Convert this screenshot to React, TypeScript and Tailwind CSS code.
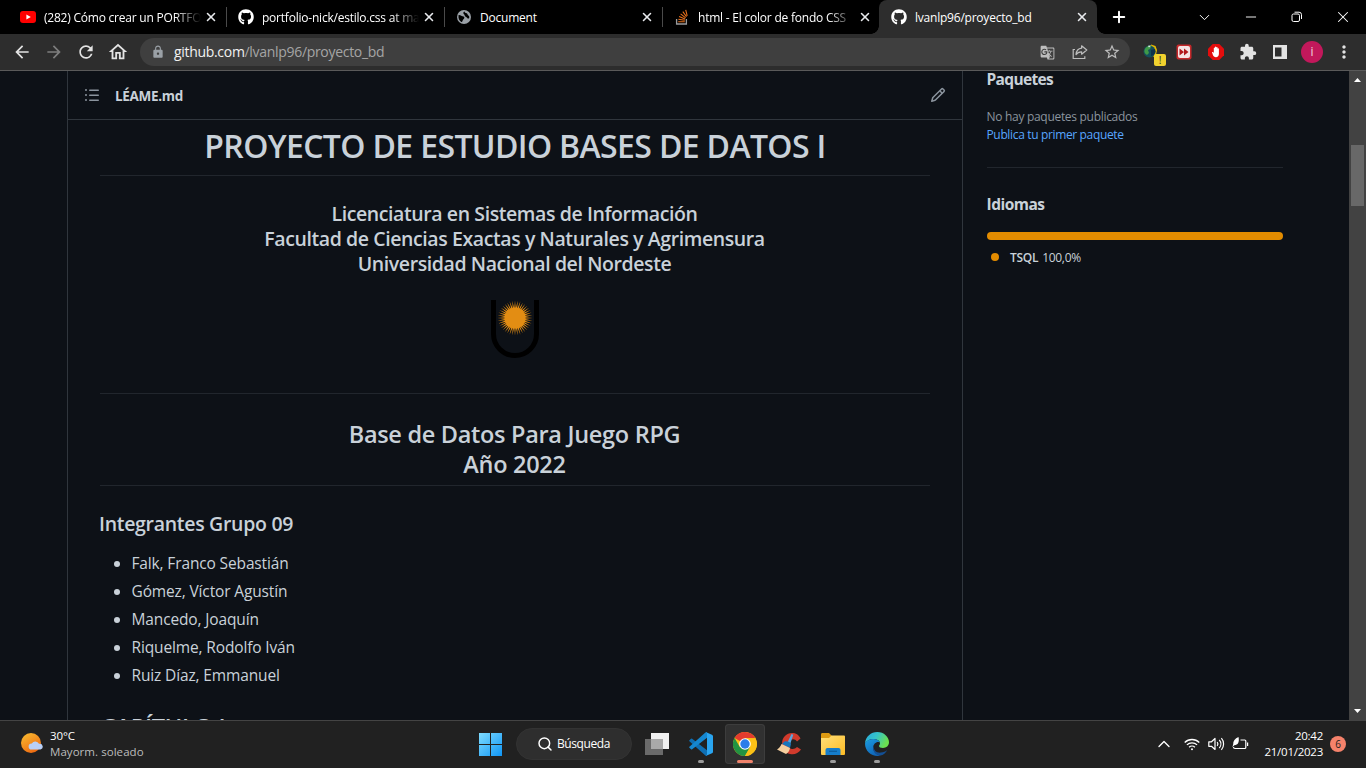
import React from "react";
import {
  MdArrowBack,
  MdArrowForward,
  MdRefresh,
  MdOutlineHome,
  MdLock,
  MdGTranslate,
  MdStarBorder,
  MdExtension,
  MdMoreVert,
} from "react-icons/md";
import { FaGithub } from "react-icons/fa";
import { ChevronDown, ChevronUp, Minus, Plus, Search, X } from "lucide-react";

function YouTubeIcon() {
  return (
    <svg viewBox="0 0 16 16" className="size-4">
      <rect x="0" y="2" width="16" height="12" rx="3" fill="#f00" />
      <path d="M6.4 5.4v5.2L10.8 8z" fill="#fff" />
    </svg>
  );
}

function StackOverflowIcon() {
  return (
    <svg viewBox="0 0 16 16" className="size-4" fill="none">
      <path d="M2.6 10v5h9.8v-5" stroke="#9a9b9d" strokeWidth="1.3" />
      <path
        d="M4.2 12.8h6.6M4.4 10.3l6.4.9M5.1 7.6l6 2.5M6.6 4.9l5 4M8.8 2.6l3.7 5.2M11.7.8l1.5 6"
        stroke="#e8711c"
        strokeWidth="1.1"
      />
    </svg>
  );
}

function GlobeIcon() {
  return (
    <svg viewBox="0 0 16 16" className="size-4">
      <circle cx="8" cy="8" r="7" fill="#9aa0a6" />
      <path
        d="M2.6 6.1c1.9-.3 2.5 1 4 1.2 1.6.1 2.2 1 1.5 2.2-.5.9-1.3.8-1.5 2.3-.1.8-.9 1.2-1.3 1.2C3.2 12 2 9 2.6 6.1zM8.7 2.4c-.2 1.2.9 1.6 2 1.8 1.1.3.7 1.8 1.6 2.3.7.3 1.2 1.2.9 2.5-.5 1.1-1.7.5-2.1-.3-.6-1.2-2.3-.8-2.4-2.3-.1-1-1.3-1.3-1.4-2.3 0-.8.7-1.5 1.4-1.7z"
        fill="#000"
      />
    </svg>
  );
}

function Octocat() {
  return <FaGithub className="size-4 text-white" />;
}

function Tab({
  icon,
  title,
  fade = "",
  separator = true,
}: {
  icon: React.ReactNode;
  title: string;
  fade?: string;
  separator?: boolean;
}) {
  return (
    <div className="flex h-[34px] w-[218px] shrink-0 items-center pl-3">
      {icon}
      <span className="ml-2 flex w-[156px]">
        <span className={`text-[12px] leading-[17px] tracking-[-0.22px] whitespace-nowrap text-white ${fade}`}>{title}</span>
      </span>
      <X className="ml-1 size-[14px] text-[#e8eaed]" strokeWidth={2.7} />
      {separator && <span className="-mr-px ml-auto h-5 w-px bg-[#4a4a4a]" />}
    </div>
  );
}

const fadeOut = "[mask-image:linear-gradient(to_right,black_130px,transparent_157px)]";

function TabStrip() {
  return (
    <div className="flex h-[34px] items-center bg-black pl-2">
      <Tab icon={<YouTubeIcon />} title="(282) Cómo crear un PORTFO" fade={fadeOut} />
      <Tab icon={<Octocat />} title="portfolio-nick/estilo.css at ma" fade={fadeOut} />
      <Tab icon={<GlobeIcon />} title="Document" />
      <Tab icon={<StackOverflowIcon />} title="html - El color de fondo CSS" fade={fadeOut} separator={false} />
      <div className="relative -ml-px h-[34px] w-[218px] rounded-t-lg bg-[#2d2d2d]">
        <span className="absolute bottom-0 -left-2 size-2 bg-[radial-gradient(circle_at_0_0,transparent_7.5px,#2d2d2d_8px)]" />
        <span className="absolute -right-2 bottom-0 size-2 bg-[radial-gradient(circle_at_100%_0,transparent_7.5px,#2d2d2d_8px)]" />
        <Tab icon={<Octocat />} title="lvanlp96/proyecto_bd" separator={false} />
      </div>
      <Plus className="ml-[13px] size-[18px] text-white" strokeWidth={2.6} />
      <div className="ml-auto flex h-7 items-center pr-[14px] text-white">
        <ChevronDown className="size-[17px]" strokeWidth={1.4} />
        <Minus className="ml-[30px] size-[16px]" strokeWidth={1.4} />
        <svg viewBox="0 0 12 12" className="ml-[32px] size-3" fill="none" stroke="white">
          <rect x="1" y="3" width="7.5" height="7.5" rx="1.5" />
          <path d="M3.5 1.2h4.5a2.5 2.5 0 0 1 2.5 2.5V8" />
        </svg>
        <X className="ml-[31px] size-[18px]" strokeWidth={1.4} />
      </div>
    </div>
  );
}

function ShareIcon() {
  return (
    <svg viewBox="0 0 16 16" className="size-4" fill="none" stroke="currentColor" strokeWidth="1.2">
      <path d="M3 5.5H1.2v9h11.6v-2.2" />
      <path d="M9.6 1.8L14.8 6 9.6 10.2V7.800C7 7.700 5.300 8.600 4 10.600 4.300 7 6.300 4.600 9.600 4.200z" strokeLinejoin="round" />
    </svg>
  );
}

function IdmIcon() {
  return (
    <svg viewBox="0 0 16 16" className="size-4">
      <path d="M8 .5l4.500 1.500L14 6l-1 5-3 2z" fill="#e6b800" />
      <circle cx="6.5" cy="7.5" r="6" fill="#14505c" />
      <path d="M1.500 6c1-3 4-5 7-4L7 5 5 6l1 3-2 2C2 10 1 8 1.500 6z" fill="#3f9a48" />
      <path d="M5 1.800l3-.3-2 2z" fill="#e8f3f5" />
      <path d="M8 6l4-1 .5 3-2 3-2.500 1z" fill="#10314c" />
    </svg>
  );
}

function Toolbar() {
  return (
    <div className="flex h-9 items-center bg-[#2d2d2d] pl-[12px] text-[#e3e3e3]">
      <MdArrowBack className="size-5" />
      <MdArrowForward className="ml-[12px] size-5 text-[#7d7d7d]" />
      <MdRefresh className="ml-[12px] size-5" />
      <MdOutlineHome className="ml-[11px] size-[22px]" />
      <div className="ml-[11px] flex h-7 w-[990px] items-center rounded-full bg-[#3f3f3f] pl-[11px] text-[#bdbdbd]">
        <MdLock className="size-[14px] text-[#9aa0a6]" />
        <p className="ml-[9px] text-[14px] leading-5 tracking-[-0.31px] text-[#a5a5a5]">
          <span className="text-[#f1f1f1]">github.com</span>/lvanlp96/proyecto_bd
        </p>
        <MdGTranslate className="ml-auto size-[15px]" />
        <span className="ml-[17px]">
          <ShareIcon />
        </span>
        <MdStarBorder className="mr-[9px] ml-[15px] size-[18px]" />
      </div>
      <div className="relative ml-[13px]">
        <IdmIcon />
        <span className="absolute top-[10px] left-[11px] flex h-3 w-3 items-center justify-center rounded-[2px] bg-[#f2d22e] text-[10px] leading-none text-[#2d2d2d]">
          !
        </span>
      </div>
      <svg viewBox="0 0 16 16" className="ml-[17px] size-4">
        <rect x="0.5" y="0.5" width="15" height="15" rx="2" fill="#c4282a" />
        <rect x="2" y="2" width="12" height="12" rx="2" fill="#f6e4e4" />
        <path d="M3.5 4.5L8 8l-4.5 3.5zM8 4.500L12.500 8 8 11.500z" fill="#b3191c" />
      </svg>
      <svg viewBox="0 0 16 16" className="ml-4 size-4">
        <path d="M4.700 0h6.600L16 4.700v6.600L11.300 16H4.700L0 11.300V4.700z" fill="#e40d0d" />
        <path
          d="M4 8.200c.7-.6 1.400.2 1.800.8V4.200c0-1 1.200-1 1.200 0V3.200c0-1 1.300-1 1.300 0v.6c0-1 1.300-1 1.300 0v1c0-.9 1.300-.9 1.300 0V10c0 1.900-1.200 3.200-3 3.200-1.700 0-2.300-.9-3-2.200z"
          fill="#fff"
        />
      </svg>
      <MdExtension className="ml-[15px] size-[18px]" />
      <svg viewBox="0 0 14 14" className="ml-4 size-[14px]">
        <path d="M0 0h14v14H0zM2 2.500v9h6.500v-9z" fill="#e3e3e3" fillRule="evenodd" />
      </svg>
      <span className="ml-[14px] flex size-[22px] items-center justify-center rounded-full bg-[#c2185b] text-[12px] leading-none text-[#f0d5df]">
        i
      </span>
      <MdMoreVert className="ml-[11px] size-5" />
    </div>
  );
}

const rays = Array.from({ length: 80 }, (_, i) => {
  const angle = (i * Math.PI) / 40;
  const radius = i % 2 === 0 ? 17.5 : 9.5;
  return `${24 + radius * Math.cos(angle)},${18 + radius * Math.sin(angle)}`;
}).join(" ");

function UniversityLogo() {
  return (
    <svg viewBox="0 0 48 58" className="h-[58px] w-12">
      <path d="M2.500 0v34a21.500 21.500 0 0 0 43 0V0" fill="none" stroke="#000" strokeWidth="5" />
      <polygon points={rays} fill="#e38d13" />
      <circle cx="24" cy="18" r="10.5" fill="#e38d13" />
    </svg>
  );
}

const members = [
  "Falk, Franco Sebastián",
  "Gómez, Víctor Agustín",
  "Mancedo, Joaquín",
  "Riquelme, Rodolfo Iván",
  "Ruiz Díaz, Emmanuel",
];

function Readme() {
  return (
    <section className="ml-[67px] w-[896px] border-x border-[#30363d]">
      <header className="flex h-[49px] items-center border-b border-[#30363d] px-4">
        <svg viewBox="0 0 16 16" className="size-4 fill-[#8b949e]">
          <path d="M2 4a1 1 0 100-2 1 1 0 000 2zm3.750-1.500a.75.75 0 000 1.500h8.500a.75.75 0 000-1.500h-8.500zm0 5a.75.75 0 000 1.500h8.500a.75.75 0 000-1.500h-8.500zm0 5a.75.75 0 000 1.500h8.500a.75.75 0 000-1.500h-8.500zM3 8a1 1 0 11-2 0 1 1 0 012 0zm-1 6a1 1 0 100-2 1 1 0 000 2z" />
        </svg>
        <h2 className="ml-[15px] pt-0.5 text-[13.5px] leading-5 font-bold tracking-[-0.3px]">LÉAME.md</h2>
        <svg viewBox="0 0 16 16" className="ml-auto size-4 fill-[#8b949e]">
          <path d="M11.013 1.427a1.75 1.75 0 012.474 0l1.086 1.086a1.75 1.75 0 010 2.474l-8.610 8.610c-.21.21-.47.364-.756.445l-3.251.93a.75.75 0 01-.927-.928l.929-3.250a1.75 1.75 0 01.445-.758l8.610-8.610zm1.414 1.060a.25.25 0 00-.354 0L10.811 3.750l1.439 1.440 1.263-1.263a.25.25 0 000-.354l-1.086-1.086zM11.189 6.250L9.750 4.810l-6.286 6.287a.25.25 0 00-.064.108l-.558 1.953 1.953-.558a.249.249 0 00.108-.064l6.286-6.286z" />
        </svg>
      </header>
      <article className="pt-1.5 pr-8 pl-8 text-[#c9d1d9]">
        <h1 className="h-[50px] border-b border-[#21262d] text-center text-[32px] leading-10 font-semibold tracking-[-0.64px]">
          PROYECTO DE ESTUDIO BASES DE DATOS I
        </h1>
        <h3 className="mt-[25px] -ml-px text-center text-[19.5px] leading-[25px] font-semibold tracking-[-0.41px]">
          Licenciatura en Sistemas de Información
          <br />
          Facultad de Ciencias Exactas y Naturales y Agrimensura
          <br />
          Universidad Nacional del Nordeste
        </h3>
        <div className="mt-[24px] flex h-[94px] justify-center border-b border-[#21262d]">
          <UniversityLogo />
        </div>
        <h2 className="mt-[25px] h-[67px] border-b border-[#21262d] pr-px text-center text-[23.5px] leading-[30px] font-semibold tracking-[-0.3px]">
          Base de Datos Para Juego RPG
          <br />
          Año 2022
        </h2>
        <h3 className="mt-[25px] -ml-px text-[19.5px] leading-[25px] font-semibold tracking-[-0.3px]">Integrantes Grupo 09</h3>
        <ul className="mt-[15px] flex list-disc flex-col gap-1 pl-[31.5px] text-[15.5px] leading-6 tracking-[-0.14px]">
          {members.map((name) => (
            <li key={name}>{name}</li>
          ))}
        </ul>
        <h2 className="mt-[25px] pl-px text-[23.5px] leading-[30px] font-semibold tracking-[-0.3px]">CAPÍTULO I</h2>
      </article>
    </section>
  );
}

function Sidebar() {
  return (
    <aside className="ml-[23.5px] w-[296px] text-[12px] leading-[18px] text-[#c9d1d9]">
      <h2 className="-mt-[4px] text-[15.5px] leading-6 font-bold tracking-[-0.65px]">Paquetes</h2>
      <p className="mt-[17px] tracking-[-0.3px] text-[#8b949e]">No hay paquetes publicados</p>
      <p className="tracking-[-0.35px] text-[#58a6ff]">Publica tu primer paquete</p>
      <div className="mt-[23px] border-t border-[#21262d] pt-6">
        <h2 className="text-[15.5px] leading-6 font-bold tracking-[-0.5px]">Idiomas</h2>
        <div className="mt-4 h-2 rounded-full bg-[#e38c00]" />
        <p className="mt-[9px] flex items-center pl-1">
          <span className="-mt-0.5 mr-[11.5px] size-2 rounded-full bg-[#e38c00]" />
          <span className="font-semibold tracking-[-0.3px]">TSQL</span>
          <span className="ml-1 tracking-[-0.3px]">100,0%</span>
        </p>
      </div>
    </aside>
  );
}

function Scrollbar() {
  return (
    <div className="ml-auto flex w-[17px] flex-col items-center bg-[#424242] py-[7px]">
      <svg viewBox="0 0 7 4" className="h-1 w-[7px]">
        <path d="M0 4l3.500-4L7 4z" fill="#fff" />
      </svg>
      <div className="mt-[63px] h-[61px] w-[13px] bg-[#686868]" />
      <svg viewBox="0 0 7 4" className="mt-auto h-1 w-[7px]">
        <path d="M0 0l3.500 4L7 0z" fill="#fff" />
      </svg>
    </div>
  );
}

function VsCodeIcon() {
  return (
    <svg viewBox="0 0 24 24" className="size-6">
      <path d="M.4 8.200L2 6.800q.6-.4 1.200 0L18 18.200V24q-1 0-1.600-.6L.4 9.300q-.5-.5 0-1.100z" fill="#0f6fb3" />
      <path d="M.4 15.800L2 17.200q.6.4 1.200 0L18 5.800V0q-1 0-1.600.6L.4 14.700q-.5.500 0 1.100z" fill="#1587d0" />
      <path d="M17.200.2L23 2.800q1 .5 1 1.500v15.400q0 1-1 1.500l-5.800 2.600q.8-.4.8-1.600V1.800q0-1.200-.8-1.600z" fill="#2aa5f0" />
    </svg>
  );
}

function ChromeIcon() {
  return (
    <svg viewBox="0 0 24 24" className="size-6">
      <circle cx="12" cy="12" r="12" fill="#fbc116" />
      <path d="M12 12L1.600 6A12 12 0 0 1 22.400 6.200H12z" fill="#e33b2e" />
      <path d="M1.600 6A12 12 0 0 0 12 24l5.200-9L12 12 6.800 15z" fill="#229342" />
      <path d="M12 6.200h10.400A12 12 0 0 1 12 24l5.100-9z" fill="#fbc116" />
      <circle cx="12" cy="12" r="5.8" fill="#fff" />
      <circle cx="12" cy="12" r="4.7" fill="#2b7de9" />
    </svg>
  );
}

function CleanerIcon() {
  return (
    <svg viewBox="0 0 24 24" className="size-6">
      <path
        d="M23.500 6.500l-3.500 3c-2-3-6-3-7.800.2-1.500 3-.7 6 1.800 7 2 .8 4.500 0 6-1.700l4 2.500c-2.500 4-7 5.500-11 4.500C8 21 5 17 5 12 5 5 9.500 1 15 1c4 0 6.500 1.500 8.500 5.500z"
        fill="#d03a2c"
      />
      <path d="M14.500 2l1.800.8-3 9-3-1z" fill="#5aa6df" />
      <path d="M7.500 9.500c2-1 6 .5 6.500 2.500l-1 4-8-4z" fill="#1976bd" />
      <path d="M4.500 12l8.500 4c-.5 3-2 5-4 6L0 17.500C2 16.500 3.500 14.500 4.500 12z" fill="#f5cf9f" />
    </svg>
  );
}

function FolderIcon() {
  return (
    <svg viewBox="0 0 24 24" className="size-6">
      <defs>
        <linearGradient id="folder" x1="0" y1="0" x2="1" y2="1">
          <stop offset="0" stopColor="#ffe07a" />
          <stop offset="1" stopColor="#fdbb24" />
        </linearGradient>
      </defs>
      <path d="M0 2.500C0 1.500.5 1 1.500 1H8l2.500 2.500V7H0z" fill="#dc9a12" />
      <path d="M0 6h8l2.500-2.500H23a1 1 0 0 1 1 1V22a1 1 0 0 1-1 1H1a1 1 0 0 1-1-1z" fill="url(#folder)" />
      <path d="M4.500 23v-5a2 2 0 0 1 2-2h11a2 2 0 0 1 2 2v5z" fill="#157dcb" />
      <path d="M8 19.300h8" stroke="#0c5c9c" strokeWidth="1.2" />
    </svg>
  );
}

function EdgeIcon() {
  return (
    <svg viewBox="0 0 24 24" className="size-6">
      <defs>
        <linearGradient id="edge-top" x1="0" y1="0" x2="1" y2="0.4">
          <stop offset="0" stopColor="#27a8e0" />
          <stop offset="0.5" stopColor="#35c3c9" />
          <stop offset="1" stopColor="#6be04f" />
        </linearGradient>
        <linearGradient id="edge-left" x1="0" y1="0" x2="0.6" y2="1">
          <stop offset="0" stopColor="#1b9de2" />
          <stop offset="1" stopColor="#1064b5" />
        </linearGradient>
      </defs>
      <path
        d="M0 11.500C.5 4.500 6 0 12.200 0 19 0 24 5 24 10.300c0 3.500-2.700 5.700-6 5.700-2.600 0-4-1-4-2 0-.7 1-1 1-2.700C15 8.800 12 7 8.500 7 4.500 7 1.500 9 0 11.500z"
        fill="url(#edge-top)"
      />
      <path d="M0 11.500C2 8 5 7 8.500 7c3 0 5.600 1.500 6.300 3.500-3-1.500-6.600 1.500-6.600 5 0 4 3 7.500 7.500 8C8 25.500 0 20 0 11.500z" fill="url(#edge-left)" />
      <path d="M8.800 14c-.6 4.500 3 7 7 6.600 2.500-.2 5-1.400 6.500-2.600-1.500 3-4 5-7 5.600-5.500-.6-8.500-5.600-6.500-9.600z" fill="#134f94" />
    </svg>
  );
}

function TaskButton({
  children,
  mark,
  active = false,
}: {
  children: React.ReactNode;
  mark?: string;
  active?: boolean;
}) {
  return (
    <div
      className={`relative flex h-10 w-10 items-center justify-center rounded ${active ? "bg-[#313131] ring-1 ring-[#3d3d3d] ring-inset" : ""}`}
    >
      {children}
      {mark && <span className={`absolute bottom-px h-[3px] rounded-full ${mark}`} />}
    </div>
  );
}

function Taskbar() {
  return (
    <footer className="flex h-12 items-center border-t border-[#444] bg-[#212121] pb-px text-white">
      <div className="flex w-[472px] items-center pl-[21px]">
        <svg viewBox="0 0 22 22" className="size-[22px]">
          <defs>
            <linearGradient id="sun" x1="0" y1="0" x2="0.6" y2="1">
              <stop offset="0" stopColor="#f8bf32" />
              <stop offset="1" stopColor="#ee6b12" />
            </linearGradient>
          </defs>
          <circle cx="10" cy="10" r="10" fill="url(#sun)" />
          <path d="M10.500 16.500a3 3 0 0 1 .3-6 4 4 0 0 1 7.200.3 2.900 2.900 0 0 1 1.500 5.700z" fill="#b9cff5" />
        </svg>
        <div className="ml-[7px] text-[11.5px] leading-4">
          <p className="tracking-[-0.1px]">30°C</p>
          <p className="tracking-[0.05px] text-[#bcbcbc]">Mayorm. soleado</p>
        </div>
      </div>
      <div className="flex items-center">
        <div className="flex w-11 pl-[7px]">
          <svg viewBox="0 0 23 23" className="size-[23px]">
            <defs>
              <linearGradient id="start" gradientUnits="userSpaceOnUse" x1="0" y1="0" x2="23" y2="23">
                <stop offset="0" stopColor="#7fdcff" />
                <stop offset="1" stopColor="#0f95f5" />
              </linearGradient>
            </defs>
            <path d="M0 0h11v11H0zM12 0h11v11H12zM0 12h11v11H0zM12 12h11v11H12z" fill="url(#start)" />
          </svg>
        </div>
        <div className="flex h-8 w-[116px] items-center rounded-full border border-[#333] bg-[#2e2e2e] pl-[20px]">
          <Search className="size-4" strokeWidth={2.2} />
          <span className="ml-[4px] text-[12px] leading-4 tracking-[-0.42px]">Búsqueda</span>
        </div>
        <div className="ml-[5px] flex gap-1">
          <TaskButton>
            <svg viewBox="0 0 24 22" className="h-[22px] w-6">
              <path d="M0 6h18v16H0z" fill="#6a6a6a" />
              <path d="M6 0h18v16H6z" fill="#f1f1f1" />
              <path d="M6 6h12v10H6z" fill="#a9a9a9" />
            </svg>
          </TaskButton>
          <TaskButton mark="w-1.5 bg-[#9b9b9b]">
            <VsCodeIcon />
          </TaskButton>
          <TaskButton active mark="w-4 bg-[#f0836c]">
            <ChromeIcon />
          </TaskButton>
          <TaskButton>
            <CleanerIcon />
          </TaskButton>
          <TaskButton mark="w-1.5 bg-[#9b9b9b]">
            <FolderIcon />
          </TaskButton>
          <TaskButton mark="w-1.5 bg-[#9b9b9b]">
            <EdgeIcon />
          </TaskButton>
        </div>
      </div>
      <div className="ml-auto flex items-center pr-5">
        <ChevronUp className="size-5" strokeWidth={1.6} />
        <svg viewBox="0 0 16 14" className="ml-[10px] h-[14px] w-4" fill="none" stroke="white" strokeWidth="1.3">
          <path d="M.7 5.500a10.400 10.400 0 0 1 14.600 0M2.900 7.900a7.300 7.300 0 0 1 10.200 0M5.100 10.200a4.200 4.200 0 0 1 5.800 0" />
          <circle cx="8" cy="12.2" r="1" fill="white" stroke="none" />
        </svg>
        <svg viewBox="0 0 17 14" className="ml-[8px] h-[14px] w-[17px]" fill="none" stroke="white" strokeWidth="1.2">
          <path d="M.8 4.800h2.700L7 1.500v11L3.500 9.300H.8z" strokeLinejoin="round" />
          <path d="M9.200 5a3.300 3.300 0 0 1 0 4M11.300 3a6 6 0 0 1 0 8M13.400 1.200a8.800 8.800 0 0 1 0 11.600" />
        </svg>
        <svg viewBox="0 0 17 14" className="ml-[7px] h-[14px] w-[17px]" fill="none" stroke="white" strokeWidth="1.2">
          <path d="M8.500 3h4.300a1 1 0 0 1 1 1v6.500a1 1 0 0 1-1 1H3a1.500 1.500 0 0 1-1.500-1.500M15.600 5.500v3.500" />
          <path d="M6.500 0C3 1.500 1 4 1.200 7.200L.4 10.300l1.900-2.100C6 8.200 7.600 5 6.500 0z" fill="white" stroke="none" />
        </svg>
        <div className="ml-[15px] text-right text-[11.5px] leading-4 tracking-[-0.25px]">
          <p>20:42</p>
          <p>21/01/2023</p>
        </div>
        <span className="ml-[7px] flex size-4 items-center justify-center rounded-full bg-[#f5826b] text-[10px] leading-none text-[#222]">
          6
        </span>
      </div>
    </footer>
  );
}

export default function App() {
  return (
    <div className="flex h-[768px] w-[1366px] flex-col overflow-hidden bg-[#0d1117] font-['Open_Sans','Noto_Sans',sans-serif]">
      <TabStrip />
      <Toolbar />
      <main className="flex h-[650px] overflow-hidden border-t border-[#5a5a5a] text-[#c9d1d9]">
        <Readme />
        <Sidebar />
        <Scrollbar />
      </main>
      <Taskbar />
    </div>
  );
}
